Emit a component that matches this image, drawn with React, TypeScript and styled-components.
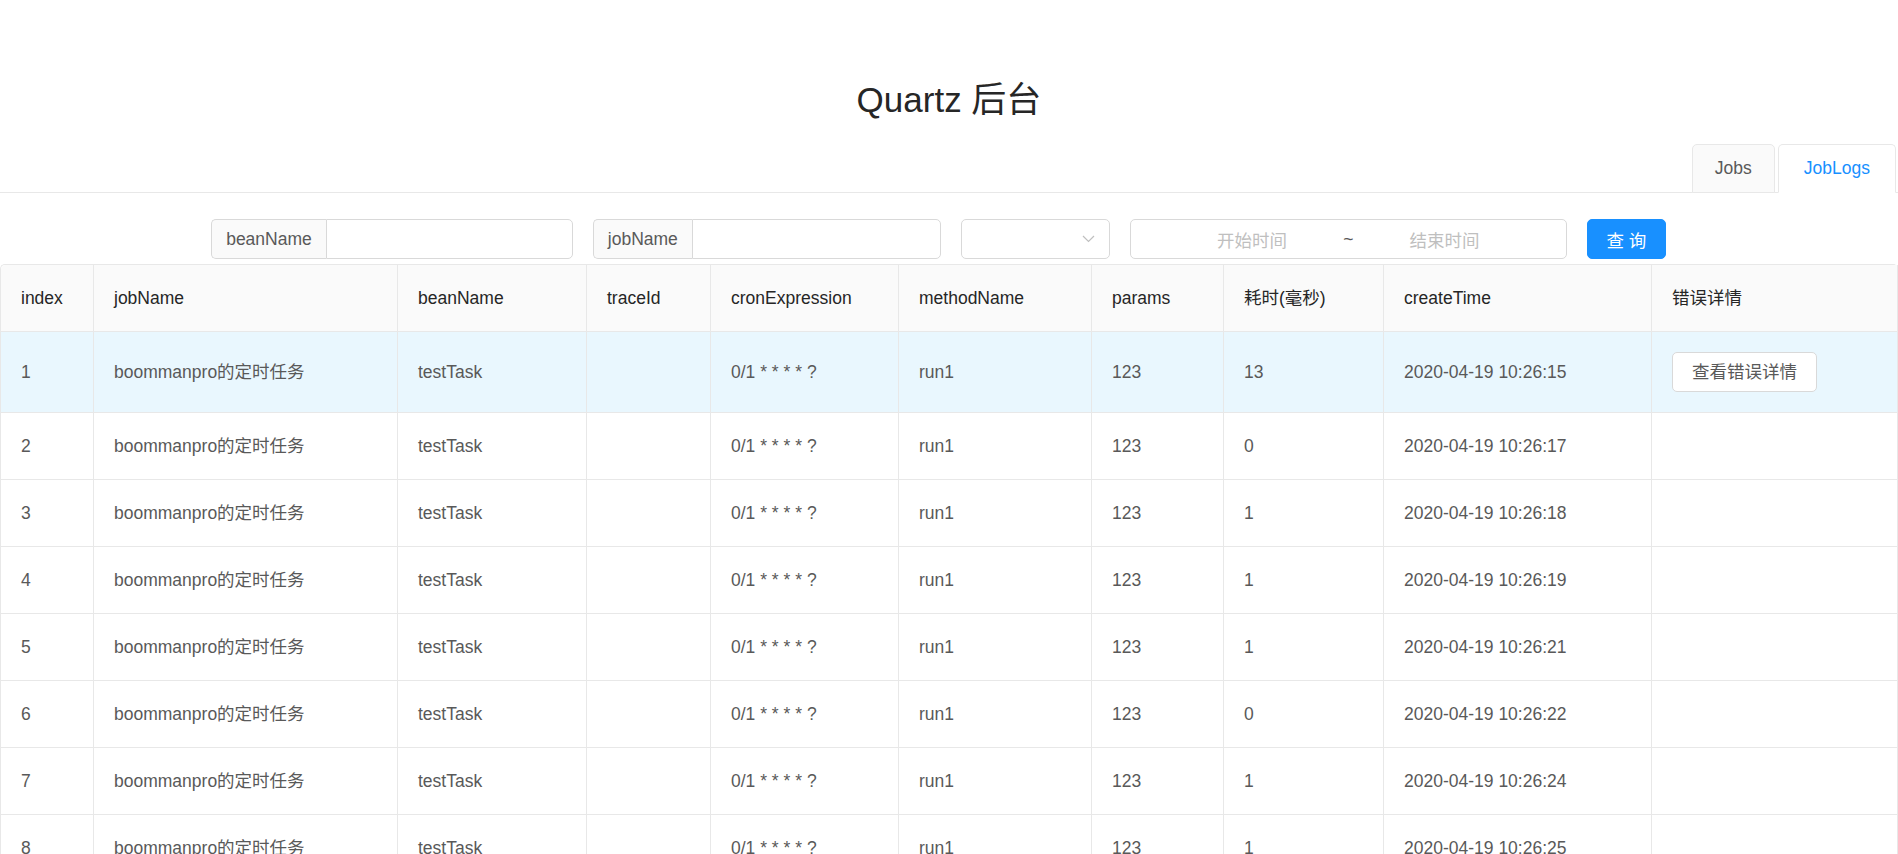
import React from "react";
import styled, { createGlobalStyle } from "styled-components";

const GlobalStyle = createGlobalStyle`
  html, body { margin: 0; padding: 0; background: #fff; }
  body {
    font-family: "Liberation Sans", Arial, "Noto Sans CJK SC", sans-serif;
    font-size: 17.5px;
    color: #595959;
  }
  * { box-sizing: border-box; }
`;

const Page = styled.div`
  width: 1898px;
  overflow: hidden;
`;

const Title = styled.h1`
  margin: 0;
  padding-top: 74px;
  height: 144px;
  line-height: 52px;
  font-size: 35px;
  font-weight: 400;
  color: #262626;
  text-align: center;
`;

const TabBar = styled.div`
  display: flex;
  justify-content: flex-end;
  align-items: flex-end;
  height: 49px;
  padding-right: 2px;
  border-bottom: 1px solid #e8e8e8;
`;

const Tab = styled.div<{ $active?: boolean; $pad: number }>`
  height: 49px;
  margin-left: 3px;
  margin-bottom: -1px;
  padding: 0 ${(p) => p.$pad}px;
  display: flex;
  align-items: center;
  border: 1px solid #e8e8e8;
  border-bottom: 1px solid ${(p) => (p.$active ? "#fff" : "#e8e8e8")};
  border-radius: 5px 5px 0 0;
  background: ${(p) => (p.$active ? "#fff" : "#fafafa")};
  color: ${(p) => (p.$active ? "#1890ff" : "#595959")};
  font-size: 17.5px;
`;

const FilterRow = styled.div`
  display: flex;
  justify-content: center;
  gap: 20px;
  margin: 26px 0 5px;
  padding-right: 21px;
  height: 40px;
`;

const InputGroup = styled.div`
  display: flex;
  height: 40px;
`;

const Addon = styled.div`
  display: flex;
  align-items: center;
  padding: 0 14px;
  background: #fafafa;
  border: 1px solid #d9d9d9;
  border-right: none;
  border-radius: 5px 0 0 5px;
  color: #595959;
`;

const TextInput = styled.input<{ $w: number }>`
  width: ${(p) => p.$w}px;
  height: 40px;
  border: 1px solid #d9d9d9;
  border-radius: 0 5px 5px 0;
  padding: 0 14px;
  font: inherit;
  outline: none;
`;

const SelectBox = styled.div`
  width: 149px;
  height: 40px;
  border: 1px solid #d9d9d9;
  border-radius: 5px;
  display: flex;
  align-items: center;
  justify-content: flex-end;
  padding-right: 14px;
`;

const RangeBox = styled.div`
  width: 437px;
  height: 40px;
  border: 1px solid #d9d9d9;
  border-radius: 5px;
  display: grid;
  grid-template-columns: 1fr 10px 1fr;
  align-items: center;
  padding: 0 30px;
`;

const RangeText = styled.span`
  text-align: center;
  color: #bfbfbf;
`;

const Tilde = styled.span`
  text-align: center;
  color: #595959;
`;

const PrimaryButton = styled.button`
  height: 40px;
  width: 79px;
  border: 1px solid #1890ff;
  border-radius: 5px;
  background: #1890ff;
  color: #fff;
  font: inherit;
  padding: 0;
`;

const Table = styled.table`
  width: 1898px;
  table-layout: fixed;
  border-collapse: separate;
  border-spacing: 0;
  border-top: 1px solid #e8e8e8;
  border-left: 1px solid #e8e8e8;
  border-radius: 5px 5px 0 0;
`;

const Th = styled.th`
  background: #fafafa;
  color: #262626;
  font-weight: 400;
  text-align: left;
  padding: 20px;
  line-height: 26px;
  border-right: 1px solid #e8e8e8;
  border-bottom: 1px solid #e8e8e8;
  white-space: nowrap;
  &:first-child { border-top-left-radius: 5px; }
`;

const Tr = styled.tr<{ $hover?: boolean }>`
  background: ${(p) => (p.$hover ? "#e9f7fe" : "#fff")};
`;

const Td = styled.td`
  padding: 20px;
  line-height: 26px;
  color: #595959;
  border-right: 1px solid #e8e8e8;
  border-bottom: 1px solid #e8e8e8;
  white-space: nowrap;
  overflow: hidden;
`;

const DefaultButton = styled.button`
  height: 40px;
  padding: 0 19px;
  border: 1px solid #d9d9d9;
  border-radius: 5px;
  background: #fff;
  color: #595959;
  font: inherit;
  display: block;
`;

const cols = [94, 304, 189, 124, 188, 193, 132, 160, 268, 246];
const headers = [
  "index",
  "jobName",
  "beanName",
  "traceId",
  "cronExpression",
  "methodName",
  "params",
  "耗时(毫秒)",
  "createTime",
  "错误详情",
];

const rows = [
  { t: 13, s: "15", err: true },
  { t: 0, s: "17" },
  { t: 1, s: "18" },
  { t: 1, s: "19" },
  { t: 1, s: "21" },
  { t: 0, s: "22" },
  { t: 1, s: "24" },
  { t: 1, s: "25" },
];

export default function App() {
  return (
    <Page>
      <GlobalStyle />
      <Title>Quartz 后台</Title>
      <TabBar>
        <Tab $pad={22}>Jobs</Tab>
        <Tab $active $pad={25}>JobLogs</Tab>
      </TabBar>
      <FilterRow>
        <InputGroup>
          <Addon>beanName</Addon>
          <TextInput $w={247} />
        </InputGroup>
        <InputGroup>
          <Addon>jobName</Addon>
          <TextInput $w={249} />
        </InputGroup>
        <SelectBox>
          <svg width="13" height="8" viewBox="0 0 13 8">
            <polyline
              points="1,1 6.5,6.5 12,1"
              fill="none"
              stroke="#bfbfbf"
              strokeWidth="1.2"
            />
          </svg>
        </SelectBox>
        <RangeBox>
          <RangeText>开始时间</RangeText>
          <Tilde>~</Tilde>
          <RangeText>结束时间</RangeText>
        </RangeBox>
        <PrimaryButton>查 询</PrimaryButton>
      </FilterRow>
      <Table>
        <colgroup>
          {cols.map((w, i) => (
            <col key={i} style={{ width: i === 0 ? w - 1 : w }} />
          ))}
        </colgroup>
        <thead>
          <tr>
            {headers.map((h) => (
              <Th key={h}>{h}</Th>
            ))}
          </tr>
        </thead>
        <tbody>
          {rows.map((r, i) => (
            <Tr key={i} $hover={i === 0}>
              <Td>{i + 1}</Td>
              <Td>boommanpro的定时任务</Td>
              <Td>testTask</Td>
              <Td></Td>
              <Td>0/1 * * * * ?</Td>
              <Td>run1</Td>
              <Td>123</Td>
              <Td>{r.t}</Td>
              <Td>2020-04-19 10:26:{r.s}</Td>
              <Td>{r.err ? <DefaultButton>查看错误详情</DefaultButton> : null}</Td>
            </Tr>
          ))}
        </tbody>
      </Table>
    </Page>
  );
}
